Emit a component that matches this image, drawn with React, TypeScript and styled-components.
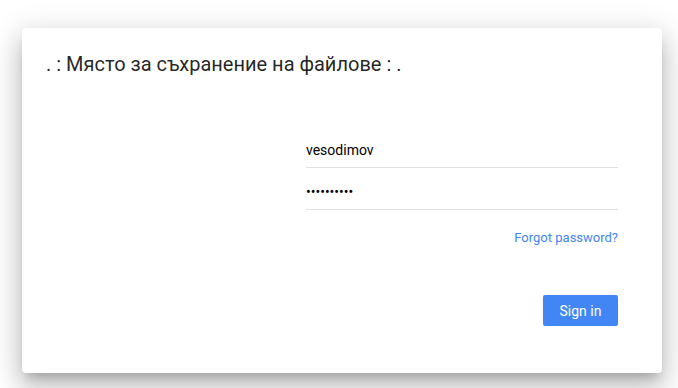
import styled, { createGlobalStyle } from "styled-components";

const GlobalStyle = createGlobalStyle`
  html, body {
    margin: 0;
    padding: 0;
    background: #fff;
    font-family: Roboto, "Noto Sans", Arial, sans-serif;
  }
`;

export default function App() {
  return (
    <>
      <GlobalStyle />
      <Page>
        <Card>
          <Title>. : Място за съхранение на файлове : .</Title>

          <Form onSubmit={(e) => e.preventDefault()}>
            <Field>
              <Input type="text" defaultValue="vesodimov" />
            </Field>
            <Field>
              <Input type="password" defaultValue="1234567890" />
            </Field>

            <Forgot href="#">Forgot password?</Forgot>

            <Actions>
              <Button type="submit">Sign in</Button>
            </Actions>
          </Form>
        </Card>
      </Page>
    </>
  );
}

const Page = styled.div`
  padding: 28px 16px 15px 22px;
`;

const Card = styled.div`
  box-sizing: border-box;
  display: flex;
  flex-direction: column;
  width: 640px;
  height: 345px;
  padding: 24px 44px 0 24px;

  background: #fff;
  border-radius: 4px;
  box-shadow: 0 16px 24px 2px rgba(0, 0, 0, 0.14),
    0 6px 30px 5px rgba(0, 0, 0, 0.12), 0 8px 10px -5px rgba(0, 0, 0, 0.2);
`;

const Title = styled.h2`
  margin: 0;
  font-size: 20px;
  line-height: 24px;
  font-weight: 400;
  color: rgba(0, 0, 0, 0.87);
`;

const Form = styled.form`
  display: flex;
  flex-direction: column;
  align-self: flex-end;
  width: 312px;
  margin-top: 50px;
`;

const Field = styled.div`
  padding: 16px 0 9px;
  border-bottom: 1px solid rgba(0, 0, 0, 0.12);
`;

const Input = styled.input`
  display: block;
  box-sizing: border-box;
  width: 100%;
  height: 16px;
  padding: 0;
  border: none;
  outline: none;
  background: transparent;

  font-family: Roboto, Arial, sans-serif;
  font-size: 14px;
  line-height: 16px;
  color: #000;
`;

const Forgot = styled.a`
  align-self: flex-end;
  margin-top: 20px;
  font-size: 13px;
  line-height: 16px;
  color: #4285f4;
  text-decoration: none;
`;

const Actions = styled.div`
  display: flex;
  justify-content: flex-end;
  margin-top: 49px;
`;

const Button = styled.button`
  width: 75px;
  height: 31px;
  padding: 0;
  border: none;
  border-radius: 2px;
  background: #4285f4;

  font-family: Roboto, Arial, sans-serif;
  font-size: 14px;
  color: #fff;
  cursor: pointer;
`;
